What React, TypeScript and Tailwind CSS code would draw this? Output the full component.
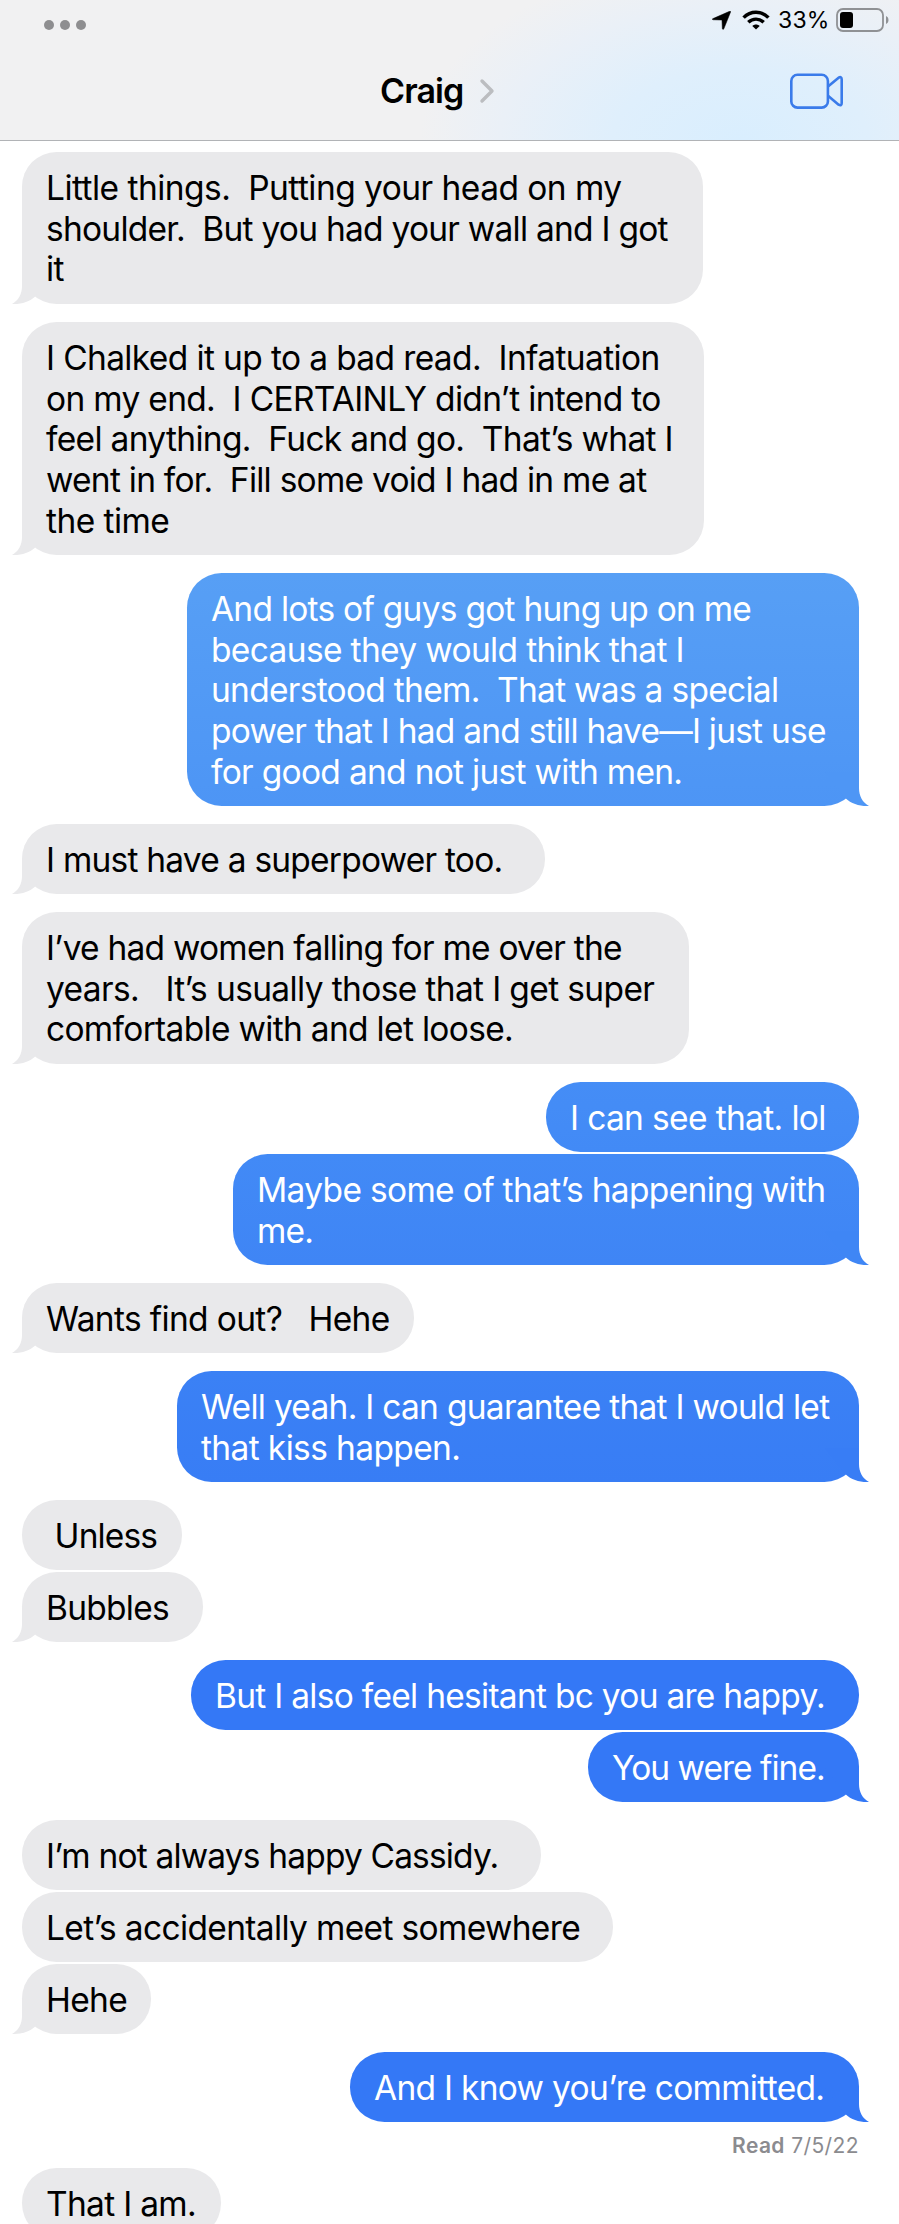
// App.tsx
import clsx from 'clsx';

type Line = { text: string; tracking: string };

type Message = {
  id: number;
  sent?: boolean;
  tail?: boolean;
  // true when the previous bubble belongs to the same sender
  grouped?: boolean;
  box: string;
  fill?: string;
  tailColor?: string;
  receipt?: string;
  lines: Line[];
};

const MESSAGES: Message[] = [
  {
    id: 1,
    tail: true,
    box: 'w-[681px] h-[152px]',
    lines: [
      { text: 'Little things.  Putting your head on my', tracking: 'tracking-[-0.53px]' },
      { text: 'shoulder.  But you had your wall and I got', tracking: 'tracking-[-0.75px]' },
      { text: 'it', tracking: 'tracking-[-0.5px]' },
    ],
  },
  {
    id: 2,
    tail: true,
    box: 'w-[682px] h-[233px]',
    lines: [
      { text: 'I Chalked it up to a bad read.  Infatuation', tracking: 'tracking-[-0.628px]' },
      { text: 'on my end.  I CERTAINLY didn’t intend to', tracking: 'tracking-[-0.68px]' },
      { text: 'feel anything.  Fuck and go.  That’s what I', tracking: 'tracking-[-0.68px]' },
      { text: 'went in for.  Fill some void I had in me at', tracking: 'tracking-[-0.75px]' },
      { text: 'the time', tracking: 'tracking-[-0.55px]' },
    ],
  },
  {
    id: 3,
    sent: true,
    tail: true,
    box: 'w-[672px] h-[233px]',
    fill: 'bg-linear-to-b from-[#579ff5] to-[#4d95f5]',
    tailColor: 'text-[#4e96f5]',
    lines: [
      { text: 'And lots of guys got hung up on me', tracking: 'tracking-[-0.74px]' },
      { text: 'because they would think that I', tracking: 'tracking-[-0.645px]' },
      { text: 'understood them.  That was a special', tracking: 'tracking-[-0.71px]' },
      { text: 'power that I had and still have—I just use', tracking: 'tracking-[-0.77px]' },
      { text: 'for good and not just with men.', tracking: 'tracking-[-0.7px]' },
    ],
  },
  {
    id: 4,
    tail: true,
    box: 'w-[523px] h-[70px]',
    lines: [{ text: 'I must have a superpower too.', tracking: 'tracking-[-0.767px]' }],
  },
  {
    id: 5,
    tail: true,
    box: 'w-[667px] h-[152px]',
    lines: [
      { text: 'I’ve had women falling for me over the', tracking: 'tracking-[-0.769px]' },
      { text: 'years.   It’s usually those that I get super', tracking: 'tracking-[-0.63px]' },
      { text: 'comfortable with and let loose.', tracking: 'tracking-[-0.684px]' },
    ],
  },
  {
    id: 6,
    sent: true,
    box: 'w-[313px] h-[70px]',
    fill: 'bg-linear-to-b from-[#458df6] to-[#428af6]',
    lines: [{ text: 'I can see that. lol', tracking: 'tracking-[-0.644px]' }],
  },
  {
    id: 7,
    sent: true,
    tail: true,
    grouped: true,
    box: 'w-[626px] h-[111px]',
    fill: 'bg-linear-to-b from-[#428af6] to-[#3f85f5]',
    tailColor: 'text-[#3f86f5]',
    lines: [
      { text: 'Maybe some of that’s happening with', tracking: 'tracking-[-0.672px]' },
      { text: 'me.', tracking: 'tracking-[-0.8px]' },
    ],
  },
  {
    id: 8,
    tail: true,
    box: 'w-[392px] h-[70px]',
    lines: [{ text: 'Wants find out?   Hehe', tracking: 'tracking-[-0.65px]' }],
  },
  {
    id: 9,
    sent: true,
    tail: true,
    box: 'w-[682px] h-[111px]',
    fill: 'bg-linear-to-b from-[#3b81f5] to-[#387df5]',
    tailColor: 'text-[#387df5]',
    lines: [
      { text: 'Well yeah. I can guarantee that I would let', tracking: 'tracking-[-0.72px]' },
      { text: 'that kiss happen.', tracking: 'tracking-[-0.62px]' },
    ],
  },
  {
    id: 10,
    box: 'w-[160px] h-[70px]',
    lines: [{ text: ' Unless', tracking: 'tracking-[-0.85px]' }],
  },
  {
    id: 11,
    tail: true,
    grouped: true,
    box: 'w-[181px] h-[70px]',
    lines: [{ text: 'Bubbles', tracking: 'tracking-[-0.72px]' }],
  },
  {
    id: 12,
    sent: true,
    box: 'w-[668px] h-[70px]',
    fill: 'bg-[#3478f6]',
    lines: [{ text: 'But I also feel hesitant bc you are happy.', tracking: 'tracking-[-0.72px]' }],
  },
  {
    id: 13,
    sent: true,
    tail: true,
    grouped: true,
    box: 'w-[271px] h-[70px]',
    fill: 'bg-[#3478f6]',
    tailColor: 'text-[#3478f6]',
    lines: [{ text: 'You were fine.', tracking: 'tracking-[-0.98px]' }],
  },
  {
    id: 14,
    box: 'w-[519px] h-[70px]',
    lines: [{ text: 'I’m not always happy Cassidy.', tracking: 'tracking-[-0.828px]' }],
  },
  {
    id: 15,
    grouped: true,
    box: 'w-[591px] h-[70px]',
    lines: [{ text: 'Let’s accidentally meet somewhere', tracking: 'tracking-[-0.65px]' }],
  },
  {
    id: 16,
    tail: true,
    grouped: true,
    box: 'w-[129px] h-[70px]',
    lines: [{ text: 'Hehe', tracking: 'tracking-[-0.7px]' }],
  },
  {
    id: 17,
    sent: true,
    tail: true,
    box: 'w-[509px] h-[70px]',
    fill: 'bg-[#3478f6]',
    tailColor: 'text-[#3478f6]',
    receipt: '7/5/22',
    lines: [{ text: 'And I know you’re committed.', tracking: 'tracking-[-0.7px]' }],
  },
  {
    id: 18,
    box: 'w-[199px] h-[70px]',
    lines: [{ text: 'That I am.', tracking: 'tracking-[-0.69px]' }],
  },
];

function Tail({ sent, color }: { sent?: boolean; color?: string }) {
  return (
    <svg
      viewBox="0 0 44 34"
      className={clsx(
        'absolute bottom-0 h-[34px] w-[44px]',
        sent ? '-right-[10px] -scale-x-100' : '-left-[10px]',
        color ?? 'text-[#e9e9eb]'
      )}
    >
      <path d="M10 0V16C10 24 6.5 30.5 0 34C9 34.2 17.5 32 23.5 26.2L44 0Z" fill="currentColor" />
    </svg>
  );
}

function Bubble({ message }: { message: Message }) {
  const { sent, tail, box, fill, tailColor, lines } = message;
  return (
    <div
      className={clsx(
        'relative shrink-0 rounded-[34.5px]',
        box,
        sent ? 'text-white' : 'bg-[#e9e9eb] text-black',
        fill
      )}
    >
      {tail && <Tail sent={sent} color={tailColor} />}
      <div className="relative pt-[16px] pl-[24px] text-[33.5px] leading-[40.65px] whitespace-pre">
        {lines.map((line) => (
          <p key={line.text} className={line.tracking}>
            {line.text}
          </p>
        ))}
      </div>
    </div>
  );
}

function StatusBar() {
  return (
    <div className="flex h-[40px] items-center justify-between pr-[9px] pl-[44px]">
      <div className="flex gap-[6px] pt-[10px]">
        <span className="size-[10px] rounded-full bg-[#8e8e90]" />
        <span className="size-[10px] rounded-full bg-[#8e8e90]" />
        <span className="size-[10px] rounded-full bg-[#8e8e90]" />
      </div>
      <div className="flex items-center">
        <svg viewBox="0 0 18 18" className="mr-[11px] h-[19px] w-[19px]">
          <path
            d="M17.6 .9L11.2 16.9Q10.5 18.2 9.8 16.9L9.5 9Q9.5 8.5 9 8.5L1 8.3Q-.4 7.9 1 7.2L16.7 .3Q17.9 0 17.6 .9Z"
            fill="black"
            stroke="black"
            strokeWidth="0.5"
          />
        </svg>
        <svg viewBox="0 0 28 20" className="mr-[8px] h-[20px] w-[28px]" fill="none" stroke="black">
          <path d="M1.6 7.6C8.6 .4 19.4 .4 26.4 7.6" strokeWidth="3.5" />
          <path d="M6.3 12.3C10.7 8 17.3 8 21.7 12.3" strokeWidth="3.4" />
          <path d="M14 19.6L10.3 15.9C12.4 13.9 15.6 13.9 17.7 15.9Z" fill="black" stroke="none" />
        </svg>
        <span className="w-[52px] text-[23px] leading-[24px] tracking-[0.2px] text-black">33%</span>
        <svg viewBox="0 0 54 24" className="ml-[6px] h-[24px] w-[54px]">
          <rect x="1" y="1" width="46" height="22" rx="6" fill="none" stroke="#8f9194" strokeWidth="1.8" />
          <rect x="4" y="4" width="13" height="16" rx="3" fill="black" />
          <path d="M50 8C53.3 9.3 53.3 14.7 50 16Z" fill="#8f9194" />
        </svg>
      </div>
    </div>
  );
}

function Header() {
  return (
    <header className="h-[141px] border-b border-[#b1b3b6] bg-[radial-gradient(ellipse_320px_180px_at_740px_140px,#d9eefe_0%,#dfeffc_40%,#eaf0f7_75%,#f1f1f2_100%)]">
      <StatusBar />
      <div className="flex h-[100px] items-center justify-between pt-[2px] pr-[55px] pl-[380px]">
        <div className="flex items-center">
          <h1 className="w-[86px] text-[34px] leading-[40px] font-semibold tracking-[-0.9px] text-black">Craig</h1>
          <svg viewBox="0 0 16 26" className="ml-[13px] h-[26px] w-[16px]">
            <path
              d="M3 3L13 13L3 23"
              fill="none"
              stroke="#bbbdc0"
              strokeWidth="3.4"
              strokeLinecap="round"
              strokeLinejoin="round"
            />
          </svg>
        </div>
        <svg
          viewBox="0 0 54 36"
          className="h-[36px] w-[54px]"
          fill="none"
          stroke="#3a7bea"
          strokeWidth="2.6"
          strokeLinejoin="round"
        >
          <rect x="1.3" y="1.8" width="36.6" height="32.8" rx="6.2" />
          <path d="M38.3 13.3L48.6 4.7Q51.7 3 51.7 6.4V30Q51.7 33.4 48.6 31.7L38.3 23.1" />
        </svg>
      </div>
    </header>
  );
}

export default function App() {
  return (
    <div className="h-[2224px] w-[899px] overflow-hidden bg-white font-['Inter',sans-serif]">
      <Header />
      <main className="flex flex-col pt-[11px] pr-[40px] pl-[22px]">
        {MESSAGES.map((message, index) => (
          <div
            key={message.id}
            className={clsx(
              'flex flex-col',
              message.sent ? 'items-end' : 'items-start',
              index > 0 && (message.grouped ? 'mt-[2px]' : 'mt-[18px]')
            )}
          >
            <Bubble message={message} />
            {message.receipt && (
              <p className="h-[28px] pt-[11px] text-[21px] leading-[26px] tracking-[0.4px] text-[#8b8b8f]">
                <span className="font-semibold">Read</span> {message.receipt}
              </p>
            )}
          </div>
        ))}
      </main>
    </div>
  );
}
